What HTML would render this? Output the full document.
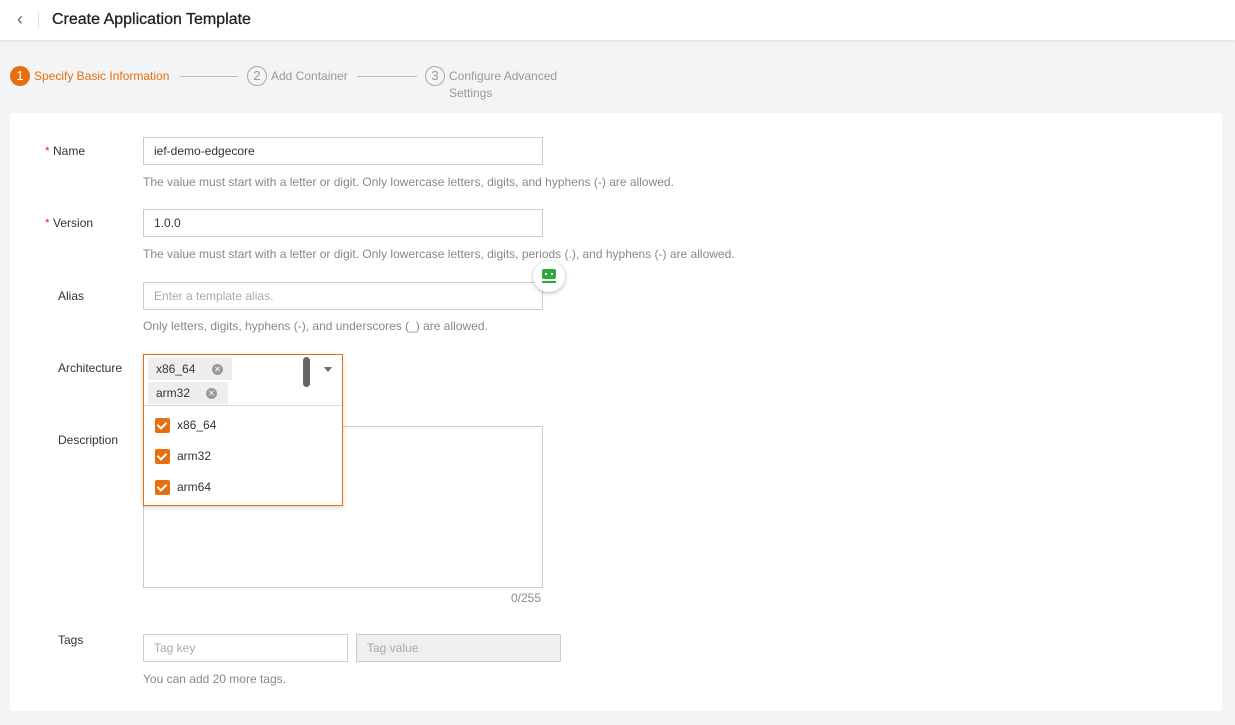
<!DOCTYPE html>
<html><head><style>
*{box-sizing:border-box;margin:0;padding:0}
body{width:1235px;height:725px;background:#f3f4f5;font-family:"Liberation Sans",sans-serif;position:relative;overflow:hidden;color:#333}
.abs{position:absolute}
.hdr{left:0;top:0;width:1235px;height:40px;background:#fff;box-shadow:0 1px 3px rgba(0,0,0,.1)}
.card{left:10px;top:113px;width:1212px;height:598px;background:#fff}
.lbl{font-size:12px;color:#333}
.star{color:#e4382b;font-size:12px}
.inp{border:1px solid #ccc;background:#fff;font-size:12px;padding-left:10px;display:flex;align-items:center}
.hint{font-size:12px;color:#888}
.tag{background:#eee;font-size:12px;height:22px;display:flex;align-items:center;padding-left:8px}
.x{width:11px;height:11px;border-radius:50%;background:#9a9a9a;position:absolute;top:5.5px;color:#fff;font-size:8px;text-align:center;line-height:11px}
.cb{width:15px;height:15px;background:#e96e0e;border-radius:2px;position:absolute;left:11px}
.cb:after{content:"";position:absolute;left:4px;top:2px;width:4px;height:7px;border:solid #fff;border-width:0 2px 2px 0;transform:rotate(45deg)}
.opt{position:absolute;left:0;font-size:12px}
</style></head><body>
<div class="abs hdr">
<div class="abs" style="left:17px;top:9px;font-size:18px;color:#666">&lsaquo;</div>
<div class="abs" style="left:38px;top:12px;width:1px;height:16px;background:#ddd"></div>
<div class="abs" style="left:52px;top:11px;font-size:16px;color:#222;-webkit-text-stroke:.3px #222">Create Application Template</div>
</div>
<div class="abs" style="left:10px;top:66px;width:20px;height:20px;border-radius:50%;background:#e96e0e;color:#fff;font-size:13px;text-align:center;line-height:20px">1</div>
<div class="abs" style="left:34px;top:69px;font-size:12px;color:#e96e0e">Specify Basic Information</div>
<div class="abs" style="left:180px;top:76px;width:58px;height:1px;background:#bbb"></div>
<div class="abs" style="left:247px;top:66px;width:20px;height:20px;border-radius:50%;border:1px solid #aaa;color:#999;font-size:13px;text-align:center;line-height:18px">2</div>
<div class="abs" style="left:271px;top:69px;font-size:12px;color:#999">Add Container</div>
<div class="abs" style="left:357px;top:76px;width:60px;height:1px;background:#bbb"></div>
<div class="abs" style="left:425px;top:66px;width:20px;height:20px;border-radius:50%;border:1px solid #aaa;color:#999;font-size:13px;text-align:center;line-height:18px">3</div>
<div class="abs" style="left:449px;top:68px;font-size:12px;color:#999;line-height:17px">Configure Advanced<br>Settings</div>
<div class="abs card"></div>
<div class="abs lbl" style="left:45px;top:144px"><span class="star">* </span>Name</div>
<div class="abs inp" style="left:143px;top:137px;width:400px;height:28px">ief-demo-edgecore</div>
<div class="abs hint" style="left:143px;top:175px">The value must start with a letter or digit. Only lowercase letters, digits, and hyphens (-) are allowed.</div>
<div class="abs lbl" style="left:45px;top:216px"><span class="star">* </span>Version</div>
<div class="abs inp" style="left:143px;top:209px;width:400px;height:28px">1.0.0</div>
<div class="abs hint" style="left:143px;top:247px">The value must start with a letter or digit. Only lowercase letters, digits, periods (.), and hyphens (-) are allowed.</div>
<div class="abs lbl" style="left:58px;top:289px">Alias</div>
<div class="abs inp" style="left:143px;top:282px;width:400px;height:28px;color:#aaa">Enter a template alias.</div>
<div class="abs" style="left:533px;top:261px;width:32px;height:31px;border-radius:50%;background:#fff;box-shadow:0 1px 4px rgba(0,0,0,.3)"><div class="abs" style="left:9px;top:8px;width:14px;height:10px;background:#2faa3a;border-radius:2px"></div><div class="abs" style="left:12px;top:12px;width:2px;height:2px;background:#fff"></div><div class="abs" style="left:18px;top:12px;width:2px;height:2px;background:#fff"></div><div class="abs" style="left:9px;top:20px;width:14px;height:2px;background:#2faa3a"></div></div>
<div class="abs hint" style="left:143px;top:319px">Only letters, digits, hyphens (-), and underscores (_) are allowed.</div>
<div class="abs lbl" style="left:58px;top:361px">Architecture</div>
<div class="abs lbl" style="left:58px;top:433px">Description</div>
<div class="abs" style="left:143px;top:426px;width:400px;height:162px;border:1px solid #ccc"></div>
<div class="abs hint" style="left:511px;top:591px">0/255</div>
<div class="abs" style="left:143px;top:354px;width:200px;height:152px;border:1px solid #e96e0e;background:#fff;box-shadow:0 2px 4px rgba(0,0,0,.15)">
<div class="abs tag" style="left:4px;top:3px;width:84px">x86_64<div class="x" style="left:64px">✕</div></div>
<div class="abs tag" style="left:4px;top:27px;width:80px">arm32<div class="x" style="left:58px">✕</div></div>
<div class="abs" style="left:159px;top:2px;width:7px;height:30px;border-radius:4px;background:#666"></div>
<div class="abs" style="left:180px;top:12px;border:4px solid transparent;border-top:5px solid #666"></div>
<div class="abs" style="left:0;top:50px;width:198px;height:1px;background:#ddd"></div>
<div class="cb" style="top:63px"></div><div class="opt" style="left:33px;top:63px">x86_64</div>
<div class="cb" style="top:94px"></div><div class="opt" style="left:33px;top:94px">arm32</div>
<div class="cb" style="top:125px"></div><div class="opt" style="left:33px;top:125px">arm64</div>
</div>
<div class="abs lbl" style="left:58px;top:633px">Tags</div>
<div class="abs inp" style="left:143px;top:634px;width:205px;height:28px;color:#aaa">Tag key</div>
<div class="abs inp" style="left:356px;top:634px;width:205px;height:28px;color:#aaa;background:#efefef">Tag value</div>
<div class="abs hint" style="left:143px;top:672px">You can add 20 more tags.</div>
</body></html>
